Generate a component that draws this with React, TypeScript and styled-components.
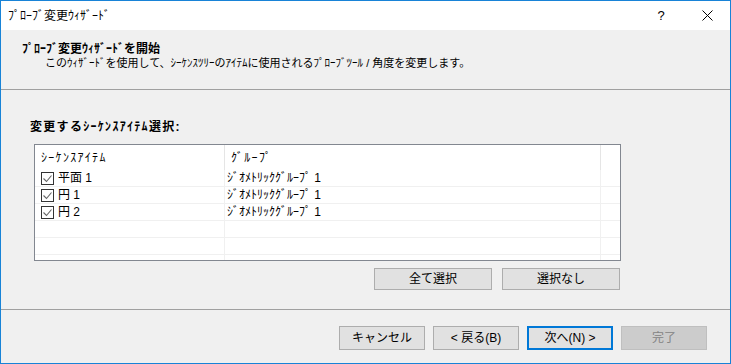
import React from "react";
import styled, { createGlobalStyle } from "styled-components";

const Global = createGlobalStyle`
  html, body { margin: 0; padding: 0; background: #f0f0f0; }
  * { box-sizing: border-box; }
  body { font-family: "Liberation Sans", "Noto Sans CJK JP", sans-serif; font-size: 12px; color: #000; }
`;

const Window = styled.div`
  width: 731px;
  height: 364px;
  border: 1px solid #1883d7;
  display: flex;
  flex-direction: column;
  background: #f0f0f0;
  overflow: hidden;
`;

const TitleBar = styled.div`
  height: 29px;
  flex: none;
  background: #fff;
  display: flex;
  align-items: center;
  padding-left: 7px;
`;

const TitleText = styled.div`
  flex: 1;
  font-size: 12px;
  line-height: 16px;
  margin-top: 1px;
`;

const TitleButton = styled.div`
  width: 46px;
  height: 29px;
  display: flex;
  align-items: center;
  justify-content: center;
  font-size: 13px;
  color: #000;
`;

const Header = styled.div`
  height: 60px;
  flex: none;
  border-bottom: 1px solid #a0a0a0;
  padding: 12px 0 0 21px;
`;

const Heading = styled.div`
  font-weight: bold;
  font-size: 12px;
  line-height: 14px;
`;

const Description = styled.div`
  font-size: 11px;
  line-height: 14px;
  padding-left: 23px;
`;

const Body = styled.div`
  flex: 1;
  padding: 29px 0 0 29px;
  display: flex;
  flex-direction: column;
`;

const Label = styled.div`
  font-weight: bold;
  font-size: 12px;
  line-height: 16px;
  letter-spacing: 1.3px;
`;

const List = styled.div`
  margin: 9px 0 0 4px;
  width: 587px;
  height: 117px;
  border: 1px solid #828790;
  background: #fff;
  overflow: hidden;
`;

const Grid = styled.div`
  display: grid;
  grid-template-columns: 190px 376px 1fr;
`;

const HeadCell = styled.div<{ $last?: boolean }>`
  height: 25px;
  padding: 6px 0 0 6px;
  line-height: 14px;
  font-size: 12px;
  letter-spacing: ${(p) => (p.$last ? "0" : "1.3px")};
  border-right: ${(p) => (p.$last ? "none" : "1px solid #e5e5e5")};
`;

const Cell = styled.div<{ $pad: number; $last?: boolean }>`
  height: 17px;
  border-bottom: 1px solid #f0f0f0;
  border-right: ${(p) => (p.$last ? "none" : "1px solid #f0f0f0")};
  padding-left: ${(p) => p.$pad}px;
  display: flex;
  align-items: center;
  gap: 4px;
  font-size: 12px;
  line-height: 16px;
  white-space: nowrap;
`;

const Check = styled.span`
  width: 13px;
  height: 13px;
  border: 1px solid #333;
  background: #fff;
  display: inline-flex;
  align-items: center;
  justify-content: center;
  flex: none;
`;

const ButtonRow = styled.div`
  display: flex;
  justify-content: flex-end;
  gap: 10px;
  width: 590px;
  margin-top: 7px;
`;

const Button = styled.button<{ $w: number; $h: number; $default?: boolean; $disabled?: boolean }>`
  width: ${(p) => p.$w}px;
  height: ${(p) => p.$h}px;
  padding: 0;
  margin: 0;
  font-family: "Liberation Sans", "Noto Sans CJK JP", sans-serif;
  font-size: 12px;
  line-height: 14px;
  background: ${(p) => (p.$disabled ? "#cccccc" : "#e1e1e1")};
  color: ${(p) => (p.$disabled ? "#838383" : "#000")};
  border: ${(p) =>
    p.$default ? "2px solid #0078d7" : p.$disabled ? "1px solid #bfbfbf" : "1px solid #adadad"};
  display: flex;
  align-items: center;
  justify-content: center;
`;

const Footer = styled.div`
  height: 54px;
  flex: none;
  border-top: 1px solid #a0a0a0;
  padding: 16px 23px 0 0;
  display: flex;
  justify-content: flex-end;
  align-items: flex-start;
  gap: 8px;
`;

const rows = [
  { name: "平面 1", group: "ｼﾞｵﾒﾄﾘｯｸｸﾞﾙｰﾌﾟ 1" },
  { name: "円 1", group: "ｼﾞｵﾒﾄﾘｯｸｸﾞﾙｰﾌﾟ 1" },
  { name: "円 2", group: "ｼﾞｵﾒﾄﾘｯｸｸﾞﾙｰﾌﾟ 1" },
  null,
  null,
  null,
];

const CheckMark = () => (
  <svg width="11" height="11" viewBox="0 0 11 11">
    <path d="M1.5 5.5 L4.5 8.5 L9.5 2.5" fill="none" stroke="#666" strokeWidth="1.1" />
  </svg>
);

export default function App() {
  return (
    <>
      <Global />
      <Window>
        <TitleBar>
          <TitleText>ﾌﾟﾛｰﾌﾞ変更ｳｨｻﾞｰﾄﾞ</TitleText>
          <TitleButton>?</TitleButton>
          <TitleButton>
            <svg width="11" height="11" viewBox="0 0 11 11">
              <path d="M0.5 0.5 L10.5 10.5 M10.5 0.5 L0.5 10.5" stroke="#000" strokeWidth="1" />
            </svg>
          </TitleButton>
        </TitleBar>
        <Header>
          <Heading>ﾌﾟﾛｰﾌﾞ変更ｳｨｻﾞｰﾄﾞを開始</Heading>
          <Description>
            このｳｨｻﾞｰﾄﾞを使用して、ｼｰｹﾝｽﾂﾘｰのｱｲﾃﾑに使用されるﾌﾟﾛｰﾌﾞﾂｰﾙ / 角度を変更します。
          </Description>
        </Header>
        <Body>
          <Label>変更するｼｰｹﾝｽｱｲﾃﾑ選択:</Label>
          <List>
            <Grid>
              <HeadCell>ｼｰｹﾝｽｱｲﾃﾑ</HeadCell>
              <HeadCell>ｸﾞﾙｰﾌﾟ</HeadCell>
              <HeadCell $last />
              {rows.map((r, i) => (
                <React.Fragment key={i}>
                  <Cell $pad={6}>
                    {r && (
                      <>
                        <Check>
                          <CheckMark />
                        </Check>
                        <span>{r.name}</span>
                      </>
                    )}
                  </Cell>
                  <Cell $pad={2}>{r ? r.group : ""}</Cell>
                  <Cell $pad={0} $last />
                </React.Fragment>
              ))}
            </Grid>
          </List>
          <ButtonRow>
            <Button $w={118} $h={22}>全て選択</Button>
            <Button $w={118} $h={22}>選択なし</Button>
          </ButtonRow>
        </Body>
        <Footer>
          <Button $w={86} $h={24}>キャンセル</Button>
          <Button $w={86} $h={24}>&lt; 戻る(B)</Button>
          <Button $w={86} $h={24} $default>次へ(N) &gt;</Button>
          <Button $w={86} $h={24} $disabled>完了</Button>
        </Footer>
      </Window>
    </>
  );
}
